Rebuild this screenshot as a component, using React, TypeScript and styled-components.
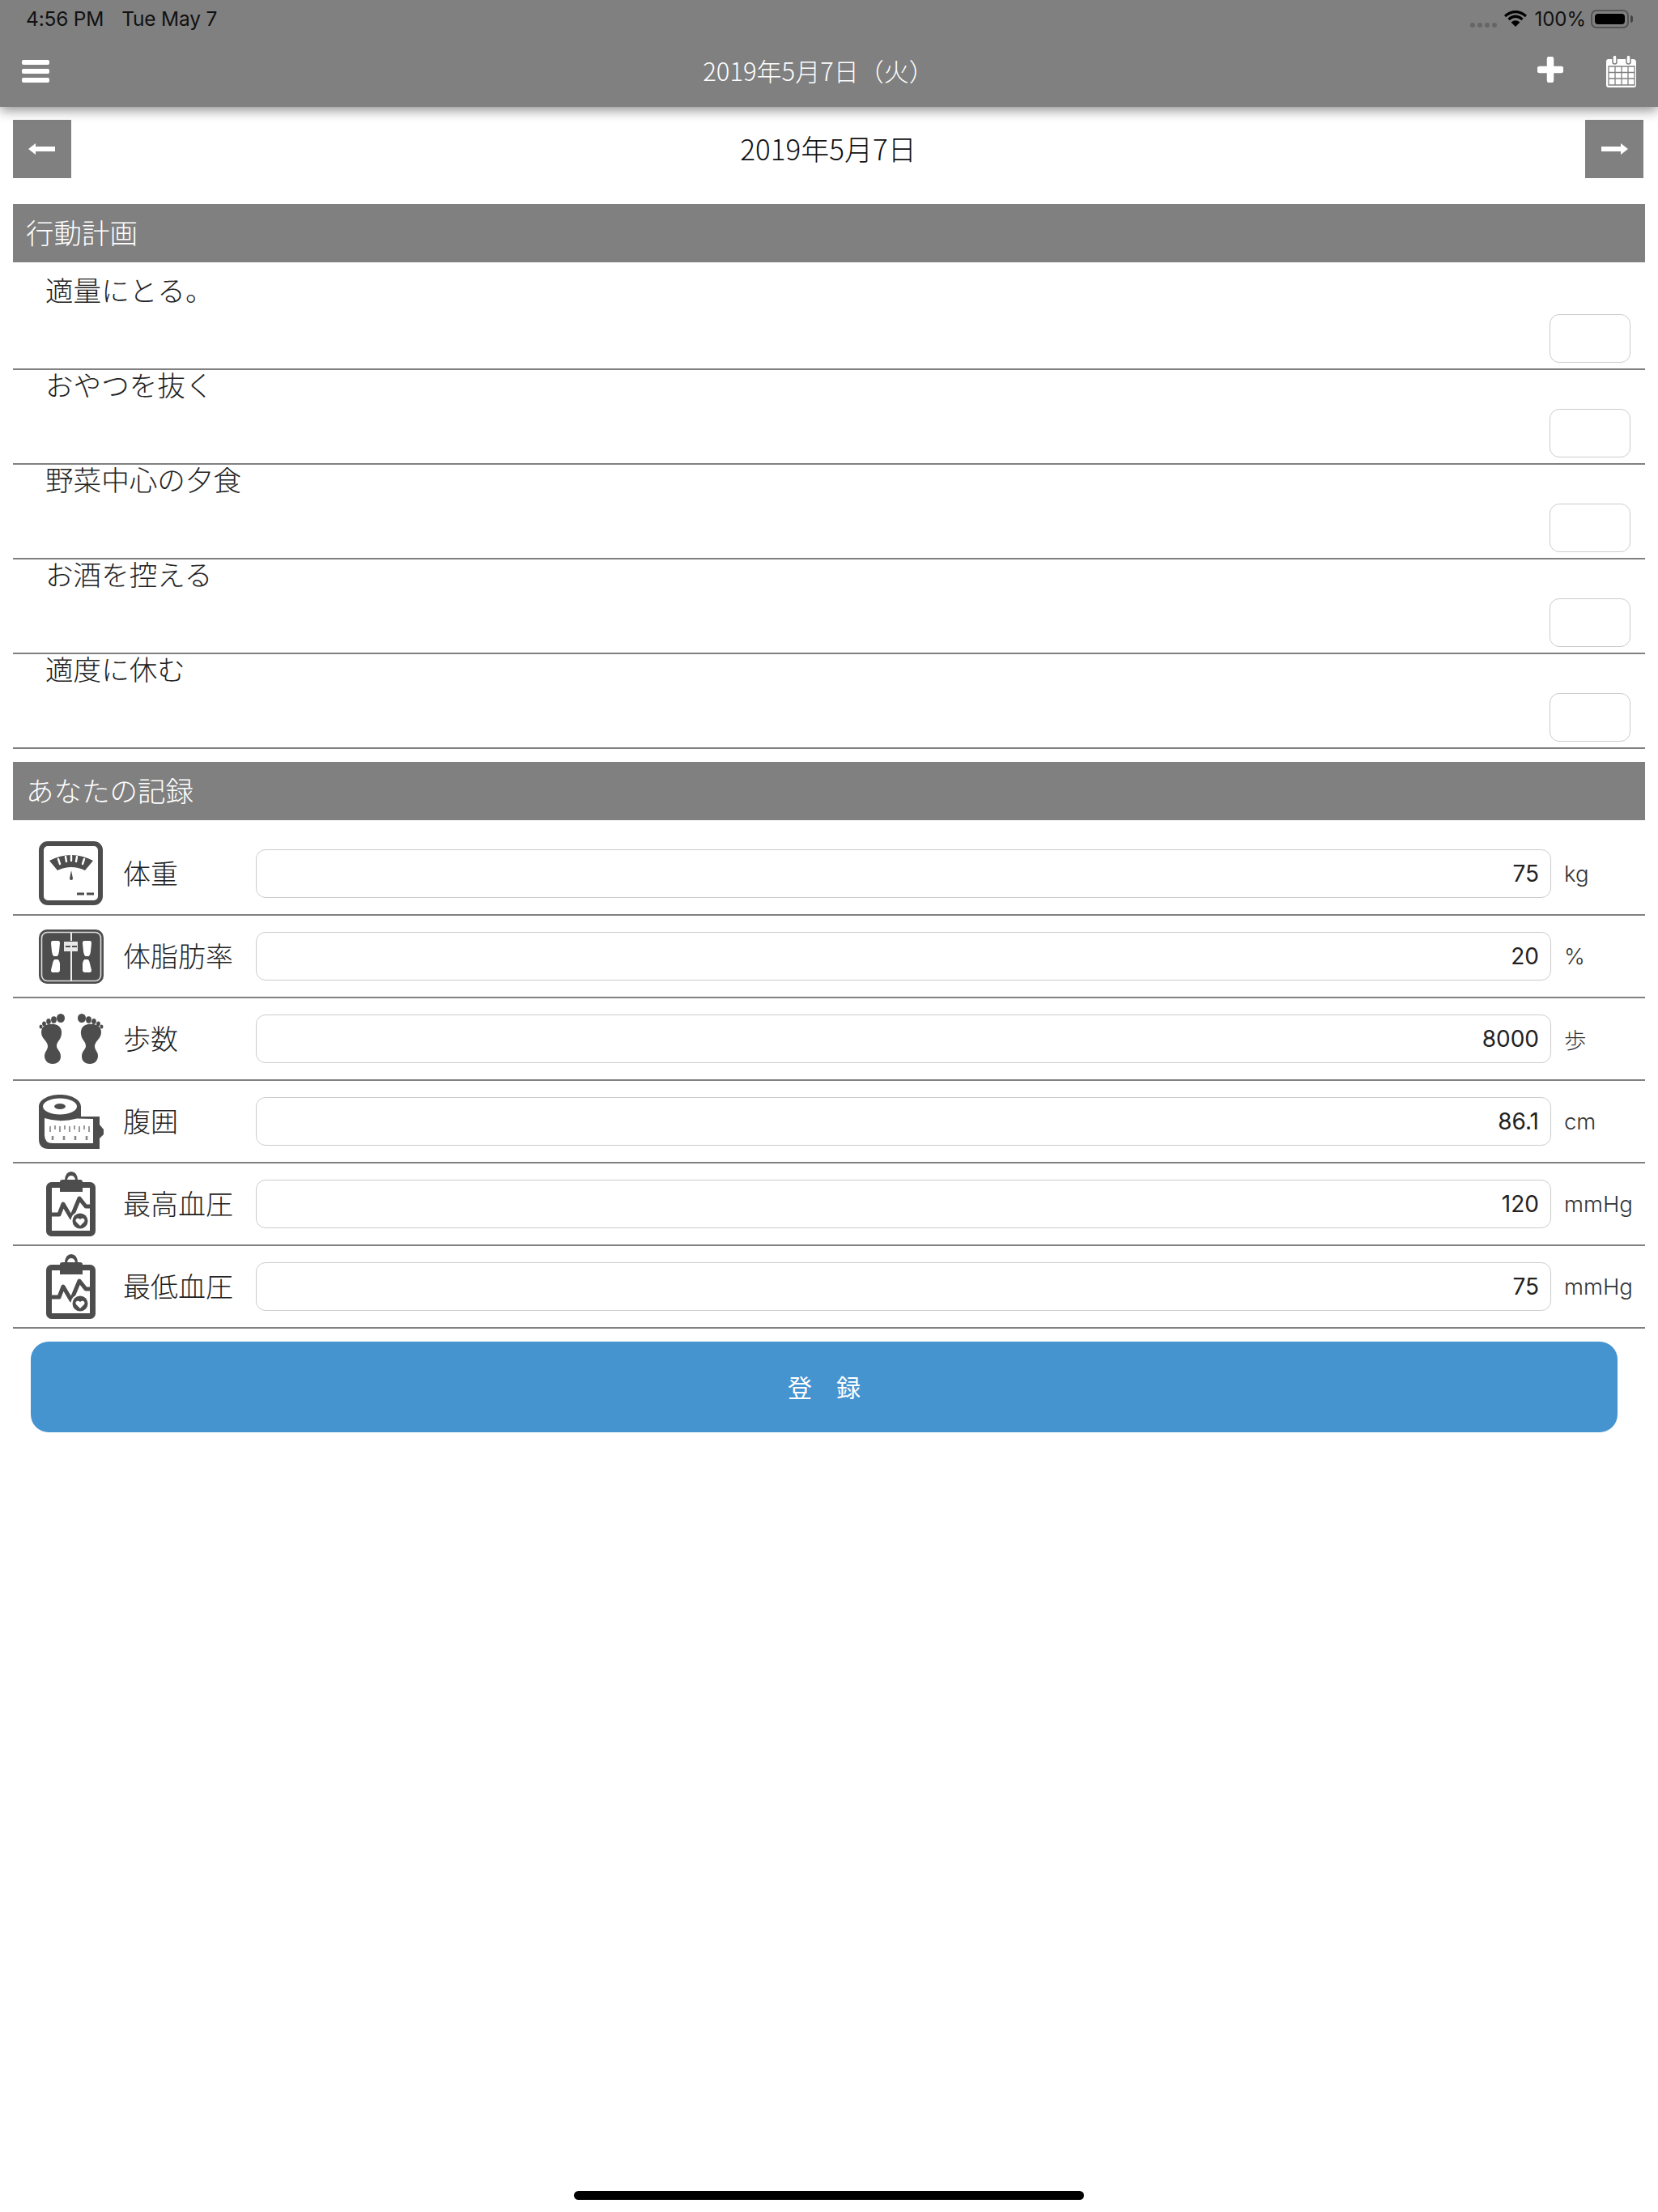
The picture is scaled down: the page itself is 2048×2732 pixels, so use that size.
import React from 'react'
import styled, { createGlobalStyle } from 'styled-components'

const GlobalStyle = createGlobalStyle`
    html, body {
        margin: 0;
        padding: 0;
        background: #fff;
    }
    body {
        font-family: 'Noto Sans CJK JP', 'Inter', sans-serif;
        color: #222;
    }
`

const plans = ['適量にとる。', 'おやつを抜く', '野菜中心の夕食', 'お酒を控える', '適度に休む']

const ICON = '#4d4d4d'

function ScaleIcon() {
    return (
        <svg width='80' height='80' viewBox='0 0 80 80'>
            <rect x='3' y='3' width='73' height='73' rx='8' fill='#fff' stroke={ICON} strokeWidth='6' />
            <path d='M13 24 Q40 10 67 24 L57 36 Q40 28 23 36 Z' fill={ICON} />
            <path d='M24 22l2 6M33 19l1 6M40 18v6M47 19l-1 6M56 22l-2 6' stroke='#fff' strokeWidth='2.4' strokeLinecap='round' />
            <path d='M40 36l2 10a2 2 0 0 1-4 0z' fill={ICON} />
            <path d='M47 65h9M59 65h9' stroke={ICON} strokeWidth='3' />
        </svg>
    )
}

function FatScaleIcon() {
    return (
        <svg width='80' height='67' viewBox='0 0 80 67'>
            <rect x='0' y='0' width='80' height='67' rx='10' fill={ICON} />
            <rect x='3.5' y='3.5' width='73' height='60' rx='7' fill='none' stroke='#ddd' strokeWidth='1.6' />
            <path d='M40 4v10M40 26v38' stroke='#eee' strokeWidth='2' />
            <rect x='31' y='15' width='17' height='12' fill='#e8e8e8' />
            <path d='M33 21h6M41 21h6' stroke={ICON} strokeWidth='2' />
            <path d='M17 14h7q2 0 2 3l-1 10q-1 6-3 6h-3q-2 0-3-6l-1-10q0-3 2-3z' fill='#fff' />
            <path d='M56 14h7q2 0 2 3l-1 10q-1 6-3 6h-3q-2 0-3-6l-1-10q0-3 2-3z' fill='#fff' />
            <path d='M20 37h3q2 0 3 5v8q0 3-3 3h-6q-2 0-2-3l2-8q1-5 3-5z' fill='#fff' />
            <path d='M57 37h3q2 0 3 5l2 8q0 3-2 3h-6q-3 0-3-3v-8q1-5 3-5z' fill='#fff' />
        </svg>
    )
}

function Foot({ mirror }: { mirror?: boolean }) {
    return (
        <g transform={mirror ? 'translate(80 0) scale(-1 1)' : undefined}>
            <path d='M14 13C22 12 29 16 28 25C27 33 22 34 22 40C22 44 27 46 27 53C27 59 22 62 17 62C11 62 7 58 7 52C7 47 11 45 11 40C11 34 3 31 3 23C3 16 8 13 14 13z' fill={ICON} />
            <ellipse cx='27' cy='5.500' rx='5' ry='5.500' fill={ICON} />
            <ellipse cx='18.500' cy='7.500' rx='3.400' ry='4.200' fill={ICON} />
            <ellipse cx='12' cy='9.500' rx='2.800' ry='3.500' fill={ICON} />
            <ellipse cx='6.500' cy='12.500' rx='2.400' ry='3' fill={ICON} />
            <ellipse cx='2.500' cy='16' rx='2' ry='2.600' fill={ICON} />
        </g>
    )
}

function FootIcon() {
    return (
        <svg width='80' height='63' viewBox='0 0 80 63'>
            <Foot />
            <Foot mirror />
        </svg>
    )
}

function TapeIcon() {
    return (
        <svg width='80' height='67' viewBox='0 0 80 67'>
            <path d='M0 15C0 6 12 0 26 0s26 6 26 15v12h23v40H12Q0 67 0 55z' fill={ICON} />
            <path d='M75 37l5 6v6l-5 5z' fill={ICON} />
            <ellipse cx='26' cy='14.500' rx='21' ry='10' fill='#fff' />
            <ellipse cx='26' cy='14.500' rx='7' ry='3.500' fill={ICON} />
            <path d='M7 29Q26 35 47 29.500L67 30V60H17Q7 60 7 50z' fill='#fff' />
            <path d='M14 39v7M20 38v5M26 39v7M32 38v5M38 39v7M44 38v5M50 39v7M56 38v5M62 39v7' stroke='#666' strokeWidth='1.300' />
            <path d='M17 51v5M31 51v5M45 51v5M59 51v5' stroke='#888' strokeWidth='2.600' />
        </svg>
    )
}

function ClipboardIcon() {
    return (
        <svg width='62' height='80' viewBox='0 0 62 80'>
            <rect x='3.500' y='16.500' width='54' height='60' rx='3' fill='#fff' stroke={ICON} strokeWidth='7' />
            <path d='M17 25V13q0-3 3-3h3q1-10 8-10t8 10h3q3 0 3 3v12z' fill={ICON} />
            <path d='M26 10q1-5 5-5t5 5z' fill='#fff' />
            <path d='M5 53h11l5-13 10 17 10-24 8 10h6' fill='none' stroke={ICON} strokeWidth='5' strokeLinejoin='round' />
            <circle cx='42' cy='61' r='11.500' fill='#fff' />
            <circle cx='42' cy='61' r='9.500' fill={ICON} />
            <path d='M42 67l-5-5c-2-3 2-6 5-3 3-3 7 0 5 3z' fill='#fff' />
        </svg>
    )
}

const metrics = [
    { icon: <ScaleIcon />, label: '体重', value: '75', unit: 'kg' },
    { icon: <FatScaleIcon />, label: '体脂肪率', value: '20', unit: '%' },
    { icon: <FootIcon />, label: '歩数', value: '8000', unit: '歩' },
    { icon: <TapeIcon />, label: '腹囲', value: '86.1', unit: 'cm' },
    { icon: <ClipboardIcon />, label: '最高血圧', value: '120', unit: 'mmHg' },
    { icon: <ClipboardIcon />, label: '最低血圧', value: '75', unit: 'mmHg' },
]

function App() {
    return (
        <Page>
            <GlobalStyle />
            <Header>
                <StatusBar>
                    <StatusTime>4:56 PM</StatusTime>
                    <StatusTime>Tue May 7</StatusTime>
                    <StatusRight>
                        <SignalDots>
                            <i />
                            <i />
                            <i />
                            <i />
                        </SignalDots>
                        <svg width='28' height='20' viewBox='0 0 28 20'>
                            <path d='M1 7q13-11 26 0' fill='none' stroke='#000' strokeWidth='3.2' />
                            <path d='M5.500 11q8.500-7.500 17 0' fill='none' stroke='#000' strokeWidth='3.2' />
                            <path d='M8.500 14.500q5.500-4.500 11 0L14 20z' fill='#000' />
                        </svg>
                        <BatteryText>100%</BatteryText>
                        <Battery>
                            <BatteryLevel />
                        </Battery>
                    </StatusRight>
                </StatusBar>
                <NavBar>
                    <MenuIcon>
                        <span />
                        <span />
                        <span />
                    </MenuIcon>
                    <NavTitle>2019年5月7日（火）</NavTitle>
                    <NavActions>
                        <svg width='32' height='32' viewBox='0 0 32 32'>
                            <path d='M16 3v26M3 16h26' stroke='#fff' strokeWidth='8.500' strokeLinecap='round' />
                        </svg>
                        <CalendarIcon width='38' height='40' viewBox='0 0 38 40'>
                            <path d='M3 5h30q4 0 4 4v28q0 3-3 3H3q-3 0-3-3V8q0-3 3-3z' fill='#fff' />
                            <rect x='8' y='0' width='5' height='11' rx='2.500' fill='#fff' stroke='#808080' strokeWidth='1.500' />
                            <rect x='25' y='0' width='5' height='11' rx='2.500' fill='#fff' stroke='#808080' strokeWidth='1.500' />
                            <path d='M3 14h32v23H3zM11 14v23M19 14v23M27 14v23M3 21.500h32M3 29h32' fill='none' stroke='#808080' strokeWidth='1.300' />
                        </CalendarIcon>
                    </NavActions>
                </NavBar>
            </Header>

            <DateRow>
                <ArrowButton>
                    <svg width='34' height='14' viewBox='0 0 34 14'>
                        <path d='M0 7l9-7v4h24v6H9v4z' fill='#fff' />
                    </svg>
                </ArrowButton>
                <DateLabel>2019年5月7日</DateLabel>
                <ArrowButton>
                    <svg width='34' height='14' viewBox='0 0 34 14'>
                        <path d='M34 7l-9-7v4H1v6h24v4z' fill='#fff' />
                    </svg>
                </ArrowButton>
            </DateRow>

            <SectionBar>行動計画</SectionBar>
            <PlanList>
                {plans.map((plan) => (
                    <PlanRow key={plan}>
                        <PlanText>{plan}</PlanText>
                        <CheckBox />
                    </PlanRow>
                ))}
            </PlanList>

            <SectionBar>あなたの記録</SectionBar>
            <MetricList>
                {metrics.map((metric) => (
                    <MetricRow key={metric.label}>
                        <IconCell>{metric.icon}</IconCell>
                        <MetricLabel>{metric.label}</MetricLabel>
                        <ValueInput type='text' defaultValue={metric.value} />
                        <Unit>{metric.unit}</Unit>
                    </MetricRow>
                ))}
            </MetricList>

            <SubmitButton>登　録</SubmitButton>
            <HomeIndicator />
        </Page>
    )
}

const Page = styled.div`
    display: flex;
    flex-direction: column;
    height: 2732px;
    overflow: hidden;
    background: #fff;
`

const Header = styled.header`
    position: relative;
    z-index: 1;
    flex: none;
    height: 132px;
    background: #808080;
    box-shadow: 0 4px 14px rgba(0, 0, 0, 0.45);
`

const StatusBar = styled.div`
    display: flex;
    align-items: center;
    gap: 22px;
    height: 46px;
    padding: 0 30px 0 32px;
`

const StatusTime = styled.span`
    font-family: 'Inter', 'Liberation Sans', sans-serif;
    font-size: 24.5px;
    letter-spacing: -0.2px;
    color: #111;
`

const StatusRight = styled.div`
    display: flex;
    align-items: center;
    margin-left: auto;
    gap: 9px;
`

const SignalDots = styled.div`
    display: flex;
    gap: 3px;
    margin-top: 16px;
    i {
        width: 6px;
        height: 6px;
        border-radius: 50%;
        background: #666;
    }
`

const BatteryText = styled.span`
    font-family: 'Inter', 'Liberation Sans', sans-serif;
    font-size: 24px;
    margin-right: -3px;
    color: #111;
`

const Battery = styled.div`
    position: relative;
    display: flex;
    width: 47px;
    height: 23px;
    margin-right: 6px;
    box-sizing: border-box;
    padding: 3px;
    border: 2px solid #555;
    border-radius: 7px;
    &::after {
        content: '';
        position: absolute;
        right: -7px;
        top: 5px;
        width: 3px;
        height: 9px;
        background: #444;
        border-radius: 0 3px 3px 0;
    }
`

const BatteryLevel = styled.div`
    flex: 1;
    background: #000;
    border-radius: 4px;
`

const NavBar = styled.div`
    display: flex;
    align-items: center;
    height: 86px;
    padding: 0 26px 6px 27px;
    box-sizing: border-box;
`

const MenuIcon = styled.div`
    display: flex;
    flex-direction: column;
    gap: 5px;
    width: 34px;
    margin-top: 3px;
    span {
        height: 6px;
        background: #fff;
        border-radius: 2px;
    }
`

const NavTitle = styled.div`
    flex: 1;
    padding-left: 62px;
    text-align: center;
    font-size: 31px;
    font-weight: 300;
    color: #fff;
`

const NavActions = styled.div`
    display: flex;
    align-items: center;
    gap: 53px;
`

const CalendarIcon = styled.svg`
    margin-top: 4px;
`

const DateRow = styled.div`
    display: flex;
    align-items: center;
    justify-content: space-between;
    height: 72px;
    margin-top: 16px;
    padding: 0 18px 0 16px;
`

const ArrowButton = styled.button`
    display: flex;
    align-items: center;
    justify-content: center;
    width: 72px;
    height: 72px;
    padding: 0;
    border: none;
    background: #808080;
`

const DateLabel = styled.div`
    padding-bottom: 3px;
    font-size: 35px;
    font-weight: 300;
    color: #111;
`

const SectionBar = styled.div`
    flex: none;
    height: 72px;
    margin: 32px 16px 0;
    padding-left: 16px;
    background: #808080;
    font-size: 34.5px;
    font-weight: 300;
    line-height: 69px;
    color: #fff;
    & ~ & {
        margin-top: 16px;
    }
`

const PlanList = styled.div`
    margin: 0 16px;
    padding-top: 16px;
`

const PlanRow = styled.div`
    display: flex;
    flex-direction: column;
    height: 117px;
    box-sizing: border-box;
    border-bottom: 2px solid #808080;
    padding: 0 18px 7px 40px;
`

const PlanText = styled.div`
    font-size: 34.6px;
    font-weight: 300;
    line-height: 35px;
    color: #222;
`

const CheckBox = styled.div`
    width: 100px;
    height: 60px;
    margin: auto 0 0 auto;
    box-sizing: border-box;
    border: 1px solid #ccc;
    border-radius: 12px;
`

const MetricList = styled.div`
    margin: 0 16px;
    padding-top: 16px;
`

const MetricRow = styled.div`
    display: flex;
    align-items: center;
    height: 102px;
    box-sizing: border-box;
    border-bottom: 2px solid #808080;
    padding-left: 32px;
`

const IconCell = styled.div`
    display: flex;
    align-items: center;
    justify-content: center;
    flex: none;
    width: 80px;
`

const MetricLabel = styled.div`
    flex: none;
    width: 188px;
    padding: 0 0 3px 24px;
    box-sizing: border-box;
    font-size: 34px;
    font-weight: 300;
    color: #222;
`

const ValueInput = styled.input`
    flex: none;
    width: 1600px;
    height: 60px;
    box-sizing: border-box;
    padding: 0 14px;
    border: 1px solid #ccc;
    border-radius: 12px;
    outline: none;
    font-family: 'Inter', 'Liberation Sans', sans-serif;
    font-size: 28px;
    text-align: right;
    color: #222;
`

const Unit = styled.div`
    margin-left: 16px;
    font-family: 'Inter', 'Noto Sans CJK JP', sans-serif;
    font-size: 27.5px;
    font-weight: 300;
    color: #333;
`

const SubmitButton = styled.button`
    flex: none;
    height: 112px;
    margin: 16px 50px 0 38px;
    padding: 0 0 3px;
    border: none;
    border-radius: 22px;
    background: #4594d0;
    font-family: 'Noto Sans CJK JP', sans-serif;
    font-size: 30px;
    color: #fff;
`

const HomeIndicator = styled.div`
    flex: none;
    width: 630px;
    height: 11px;
    margin: auto auto 15px;
    border-radius: 6px;
    background: #000;
`

export default App
